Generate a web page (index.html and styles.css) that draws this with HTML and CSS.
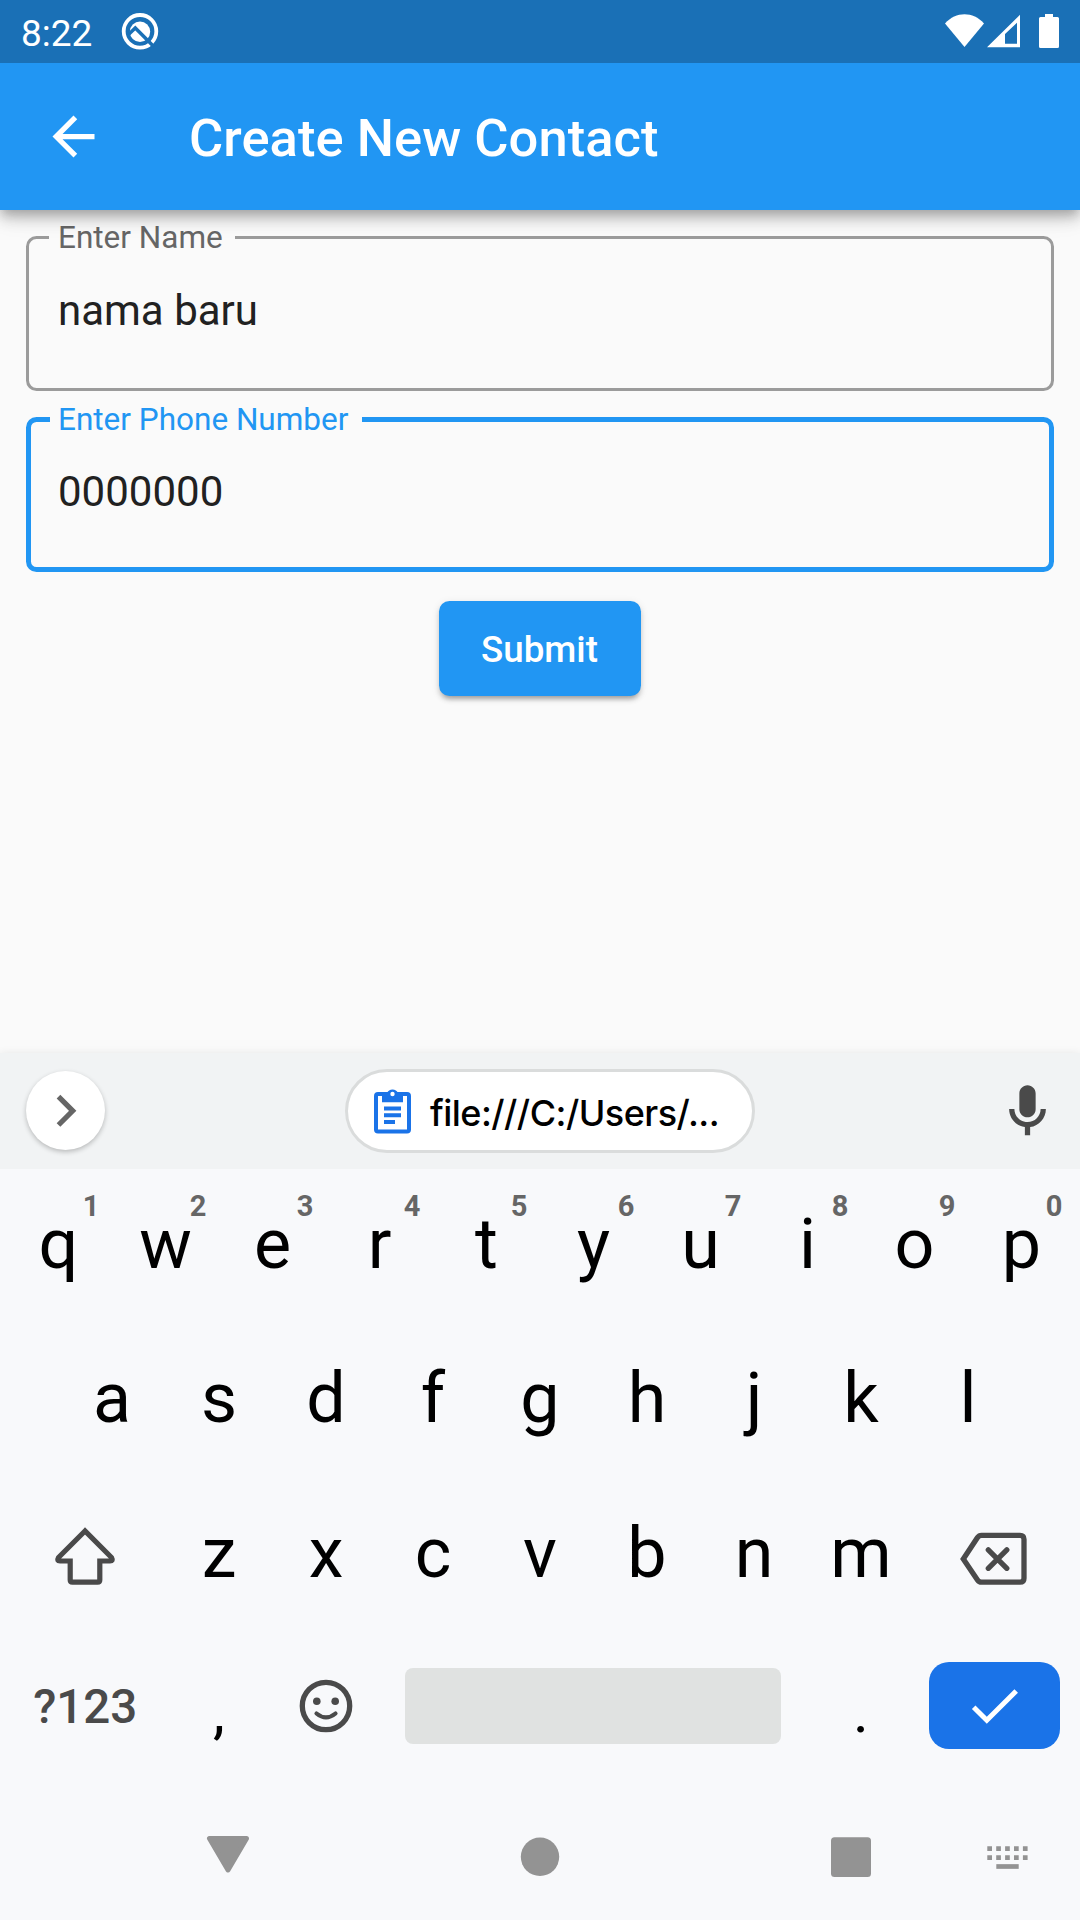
FILE: index.html
```html
<!DOCTYPE html>
<html lang="en">
<head>
<meta charset="utf-8">
<title>Create New Contact</title>
<link rel="stylesheet" href="styles.css">
</head>
<body>
<div class="status-bar">
  <span class="clock">8:22</span>
  <svg class="status-logo" width="38" height="38" viewBox="0 0 38 38">
    <circle cx="19" cy="19.300" r="16.300" fill="none" stroke="#fff" stroke-width="3.800"/>
    <circle cx="19" cy="19.800" r="10.200" fill="#fff"/>
    <path d="M7.500 22.500L14.300 16L33 34.700" fill="none" stroke="#1a70b6" stroke-width="3.400"/>
  </svg>
  <div class="status-icons">
    <svg width="39" height="34" viewBox="0 0 39 34"><path d="M0 9.500C11 -2.800 28 -2.800 39 9.500L19.500 33Z" fill="#fff"/></svg>
    <svg class="signal" width="33" height="34" viewBox="0 0 33 34"><path d="M0 33.200L33 .7V33.200ZM18 20V29.800H30V8.800Z" fill="#fff" fill-rule="evenodd"/></svg>
    <svg class="battery" width="20" height="34" viewBox="0 0 20 34"><path d="M6 0H14V3H18.500Q20 3 20 4.500V32.500Q20 34 18.500 34H1.500Q0 34 0 32.500V4.500Q0 3 1.500 3H6Z" fill="#fff"/></svg>
  </div>
</div>

<header class="app-bar">
  <svg class="back" width="63" height="63" viewBox="0 0 24 24"><path d="M20 11H7.830l5.590-5.590L12 4l-8 8 8 8 1.410-1.410L7.830 13H20v-2z" fill="#fff"/></svg>
  <h1 class="title">Create New Contact</h1>
</header>

<main class="form">
  <fieldset class="field">
    <legend class="field-label">Enter Name</legend>
    <div class="field-value">nama baru</div>
  </fieldset>
  <fieldset class="field field-focused">
    <legend class="field-label">Enter Phone Number</legend>
    <div class="field-value">0000000</div>
  </fieldset>
  <button class="submit">Submit</button>
</main>

<section class="keyboard">
  <div class="suggestions">
    <div class="expand">
      <svg width="79" height="79" viewBox="0 0 79 79"><path d="M32.500 25.700L46.700 39.800L32.500 54" fill="none" stroke="#666" stroke-width="5.200"/></svg>
    </div>
    <div class="clip">
      <svg class="clip-icon" width="37" height="46" viewBox="0 0 37 46">
        <rect x="2" y="6" width="33" height="37.500" rx="2" fill="none" stroke="#1a73e8" stroke-width="4"/>
        <path d="M8 5H13A6 6 0 0 1 24 5H29V14.300H8Z" fill="#1a73e8"/>
        <circle cx="18.500" cy="6" r="2.200" fill="#fff"/>
        <path d="M10 20.500H27M10 27.200H27M10 34H21" stroke="#1a73e8" stroke-width="4"/>
      </svg>
      <span class="clip-text">file:///C:/Users/...</span>
    </div>
    <svg class="mic" width="63" height="63" viewBox="0 0 24 24"><path d="M12 14.200c1.700 0 3.100-1.400 3.100-3.100V5.100c0-1.700-1.400-3.100-3.100-3.100S8.900 3.400 8.900 5.100v6c0 1.700 1.400 3.100 3.100 3.100zM17 11c0 2.760-2.240 5-5 5s-5-2.240-5-5H5c0 3.530 2.610 6.430 6 6.920V21h2v-3.080c3.390-.49 6-3.390 6-6.920h-2z" fill="#4a4a4a"/></svg>
  </div>

  <div class="row">
    <div class="key">q<span class="hint">1</span></div>
    <div class="key">w<span class="hint">2</span></div>
    <div class="key">e<span class="hint">3</span></div>
    <div class="key">r<span class="hint">4</span></div>
    <div class="key">t<span class="hint">5</span></div>
    <div class="key">y<span class="hint">6</span></div>
    <div class="key">u<span class="hint">7</span></div>
    <div class="key">i<span class="hint">8</span></div>
    <div class="key">o<span class="hint">9</span></div>
    <div class="key">p<span class="hint">0</span></div>
  </div>
  <div class="row row-home">
    <div class="key">a</div>
    <div class="key">s</div>
    <div class="key">d</div>
    <div class="key">f</div>
    <div class="key">g</div>
    <div class="key">h</div>
    <div class="key">j</div>
    <div class="key">k</div>
    <div class="key">l</div>
  </div>
  <div class="row">
    <div class="key key-wide">
      <svg class="shift" width="62" height="60" viewBox="0 0 62 60"><path d="M31 5L4.500 31.500Q2.500 35 6 35H16.200V54Q16.200 56.200 18.400 56.200H43.600Q45.800 56.200 45.800 54V35H56Q59.500 35 57.500 31.500Z" fill="none" stroke="#4a4a4a" stroke-width="5.200"/></svg>
    </div>
    <div class="key">z</div>
    <div class="key">x</div>
    <div class="key">c</div>
    <div class="key">v</div>
    <div class="key">b</div>
    <div class="key">n</div>
    <div class="key">m</div>
    <div class="key key-wide">
      <svg class="delete" width="67" height="54" viewBox="0 0 67 54">
        <path d="M3.300 27L17.500 5.500Q19 3.300 21.500 3.300H60Q64 3.300 64 7.300V46.200Q64 50.200 60 50.200H21.500Q19 50.200 17.500 48Z" fill="none" stroke="#4a4a4a" stroke-width="5.300"/>
        <path d="M28.300 17.800L46.800 36.300M46.800 17.800L28.300 36.300" stroke="#4a4a4a" stroke-width="5.300" stroke-linecap="round"/>
      </svg>
    </div>
  </div>
  <div class="row row-bottom">
    <div class="key key-wide key-symbols">?123</div>
    <div class="key key-punct">,</div>
    <div class="key">
      <svg class="emoji" width="54" height="54" viewBox="0 0 54 54">
        <circle cx="27" cy="27" r="23.700" fill="none" stroke="#4a4a4a" stroke-width="5.300"/>
        <circle cx="17.800" cy="22.200" r="3.800" fill="#4a4a4a"/>
        <circle cx="36.200" cy="22.200" r="3.800" fill="#4a4a4a"/>
        <path d="M17.500 34.500Q27 42.300 36.500 34.500" fill="none" stroke="#4a4a4a" stroke-width="4.200" stroke-linecap="round"/>
      </svg>
    </div>
    <div class="space-cell"><div class="space"></div></div>
    <div class="key key-punct">.</div>
    <div class="key key-wide">
      <div class="enter"><svg width="131" height="87" viewBox="0 0 131 87"><path d="M44.700 45.200L57.800 58.300L87.200 28.900" fill="none" stroke="#fff" stroke-width="5"/></svg></div>
    </div>
  </div>

  <nav class="nav-bar">
    <svg width="312" height="133" viewBox="0 0 312 133"><path d="M137.500 51.500H174.500L156 83Z" fill="#939393" stroke="#939393" stroke-width="5" stroke-linejoin="round"/></svg>
    <svg width="312" height="133" viewBox="0 0 312 133"><circle cx="156" cy="69.800" r="19.200" fill="#939393"/></svg>
    <svg width="231" height="133" viewBox="0 0 231 133"><rect x="135" y="50.200" width="40" height="39.800" rx="3.500" fill="#939393"/></svg>
    <svg width="153" height="133" viewBox="0 0 153 133"><path d="M60.300 61.700H101.500M60.300 70.600H101.500" stroke="#939393" stroke-width="4.700" stroke-dasharray="4.700 4.200"/><path d="M69.300 79.500H91.700" stroke="#939393" stroke-width="4.700"/></svg>
  </nav>
</section>
</body>
</html>
```

FILE: styles.css
```css
* {
  box-sizing: border-box;
}

body {
  margin: 0;
  width: 1080px;
  height: 1920px;
  display: flex;
  flex-direction: column;
  overflow: hidden;
  background: #fafafa;
  font-family: Roboto, "Liberation Sans", sans-serif;
}

svg {
  display: block;
  flex: none;
}

.status-bar {
  height: 63px;
  flex: none;
  display: flex;
  align-items: flex-start;
  padding: 0 21px;
  background: #1a70b6;
  color: #fff;
}

.clock {
  width: 100px;
  font-size: 37px;
  line-height: 41px;
  margin-top: 13px;
}

.status-logo {
  margin-top: 12px;
}

.status-icons {
  display: flex;
  margin: 14px 0 0 auto;
}

.signal {
  margin-left: 3px;
}

.battery {
  margin-left: 19px;
}

.app-bar {
  height: 147px;
  flex: none;
  display: flex;
  align-items: center;
  padding-left: 42px;
  background: #2196f3;
  box-shadow: 0 5px 10px -2px rgba(0, 0, 0, 0.2), 0 10px 13px rgba(0, 0, 0, 0.14), 0 3px 26px rgba(0, 0, 0, 0.12);
  clip-path: inset(0 0 -40px 0);
}

.title {
  margin: 2px 0 0 84px;
  color: #fff;
  font-size: 52.5px;
  font-weight: 500;
  line-height: 62px;
  letter-spacing: 0.04px;
}

.form {
  flex: 1;
  display: flex;
  flex-direction: column;
  align-items: center;
  padding: 12px 26px 0;
}

.field {
  width: 1028px;
  height: 169px;
  flex: none;
  margin: 0;
  padding: 33px 29px 0;
  border: 3px solid #9b9b9b;
  border-radius: 10.5px;
}

.field-label {
  width: 186px;
  margin-left: -9px;
  padding: 0 0 0 9px;
  font-size: 31.5px;
  line-height: 31px;
  white-space: nowrap;
  color: #666;
}

.field-value {
  font-size: 42px;
  line-height: 50px;
  color: #212121;
}

.field-focused {
  height: 168px;
  margin-top: 13px;
  padding: 32px 27px 0;
  border: 5px solid #2196f3;
}

.field-focused .field-label {
  width: 312px;
  margin-left: -8px;
  padding-left: 8px;
  color: #2196f3;
}

.submit {
  width: 202px;
  height: 95px;
  margin-top: 29px;
  padding: 2px 1px 0 0;
  border: 0;
  border-radius: 10.5px;
  background: #2196f3;
  color: #fff;
  font: 500 36.75px/43px Roboto, sans-serif;
  box-shadow: 0 6px 4px -4px rgba(0, 0, 0, 0.2), 0 4px 5px rgba(0, 0, 0, 0.14), 0 2px 9px rgba(0, 0, 0, 0.1);
}

.keyboard {
  height: 867px;
  flex: none;
  display: flex;
  flex-direction: column;
  background: #f8f9fb;
  box-shadow: 0 0 8px rgba(0, 0, 0, 0.08);
}

.suggestions {
  height: 116px;
  flex: none;
  display: flex;
  align-items: center;
  padding: 0 21px 0 26px;
  background: #f1f3f4;
}

.expand {
  width: 79px;
  height: 79px;
  margin-bottom: 1px;
  border-radius: 50%;
  background: #fff;
  box-shadow: 0 2px 5px rgba(0, 0, 0, 0.24);
}

.clip {
  width: 410px;
  height: 84px;
  display: flex;
  align-items: center;
  margin-left: 240px;
  padding-left: 26px;
  border: 3px solid #dadcdc;
  border-radius: 42px;
  background: #fff;
}

.clip-text {
  margin: 5px 0 0 19px;
  font: 500 36px/45px Inter, sans-serif;
  letter-spacing: -0.53px;
  white-space: nowrap;
  color: #000;
}

.mic {
  margin-left: auto;
}

.row {
  height: 154.5px;
  flex: none;
  display: flex;
  justify-content: center;
  align-items: stretch;
  padding-bottom: 4px;
}

.row-home {
  padding-bottom: 6px;
}

.row-bottom {
  padding-bottom: 8px;
}

.key {
  position: relative;
  width: 107px;
  display: flex;
  justify-content: center;
  align-items: center;
  font-size: 70px;
  line-height: 82px;
  color: #000;
}

.key-wide {
  width: 160.5px;
}

.hint {
  position: absolute;
  top: 21px;
  left: 66px;
  width: 40px;
  text-align: center;
  font-size: 29px;
  font-weight: 700;
  line-height: 32px;
  color: #666;
}

.shift {
  margin-top: 6px;
}

.delete {
  margin: 12px 2px 0 0;
}

.key-symbols {
  padding-top: 2px;
  font-size: 47.5px;
  font-weight: 500;
  color: #4a4a4a;
}

.key-punct {
  padding-top: 12px;
  font-size: 60px;
}

.emoji {
  margin-right: 1px;
}

.space-cell {
  width: 428px;
  display: flex;
  justify-content: center;
  align-items: center;
  padding-right: 1px;
}

.space {
  width: 376px;
  height: 76px;
  border-radius: 8px;
  background: #e0e2e1;
}

.enter {
  width: 131px;
  height: 87px;
  border-radius: 20px;
  background: #1a73e8;
}

.nav-bar {
  height: 133px;
  flex: none;
  display: flex;
  padding-left: 72px;
}
```
